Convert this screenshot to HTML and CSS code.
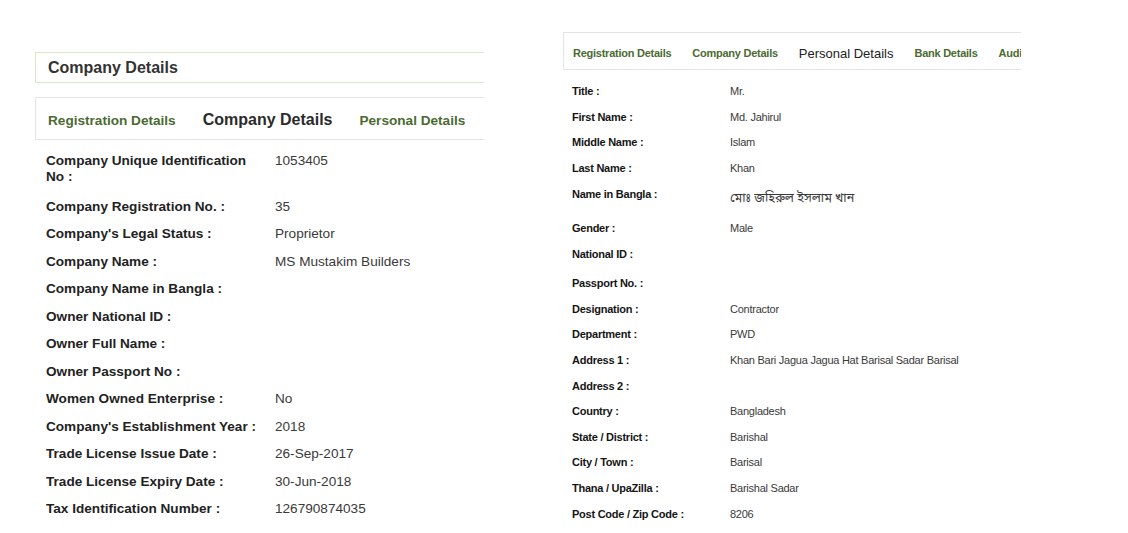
FILE: index.html
```html
<!DOCTYPE html>
<html lang="en">
<head>
    <meta charset="UTF-8">
    <meta name="viewport" content="width=device-width, initial-scale=1.0">
    <title>Contractor Profile</title>
    <link rel="stylesheet" href="styles.css">
</head>
<body>
    <div class="page">
        <!-- Company side -->
        <div class="panel company">
            <div class="panel-title">Company Details</div>

            <div class="tabs">
                <span class="tab">Registration Details</span>
                <span class="tab active">Company Details</span>
                <span class="tab">Personal Details</span>
            </div>

            <div class="details">
                <div class="row first">
                    <span class="label">Company Unique Identification No :</span>
                    <span class="value">1053405</span>
                </div>
                <div class="row">
                    <span class="label">Company Registration No. :</span>
                    <span class="value">35</span>
                </div>
                <div class="row">
                    <span class="label">Company's Legal Status :</span>
                    <span class="value">Proprietor</span>
                </div>
                <div class="row">
                    <span class="label">Company Name :</span>
                    <span class="value">MS Mustakim Builders</span>
                </div>
                <div class="row">
                    <span class="label">Company Name in Bangla :</span>
                    <span class="value"></span>
                </div>
                <div class="row">
                    <span class="label">Owner National ID :</span>
                    <span class="value"></span>
                </div>
                <div class="row">
                    <span class="label">Owner Full Name :</span>
                    <span class="value"></span>
                </div>
                <div class="row">
                    <span class="label">Owner Passport No :</span>
                    <span class="value"></span>
                </div>
                <div class="row">
                    <span class="label">Women Owned Enterprise :</span>
                    <span class="value">No</span>
                </div>
                <div class="row">
                    <span class="label">Company's Establishment Year :</span>
                    <span class="value">2018</span>
                </div>
                <div class="row">
                    <span class="label">Trade License Issue Date :</span>
                    <span class="value">26-Sep-2017</span>
                </div>
                <div class="row">
                    <span class="label">Trade License Expiry Date :</span>
                    <span class="value">30-Jun-2018</span>
                </div>
                <div class="row">
                    <span class="label">Tax Identification Number :</span>
                    <span class="value">126790874035</span>
                </div>
            </div>
        </div>

        <!-- Personal side -->
        <div class="panel personal">
            <div class="tabs">
                <span class="tab">Registration Details</span>
                <span class="tab">Company Details</span>
                <span class="tab active">Personal Details</span>
                <span class="tab">Bank Details</span>
                <span class="tab">Audit Details</span>
            </div>

            <div class="details">
                <div class="row">
                    <span class="label">Title :</span>
                    <span class="value">Mr.</span>
                </div>
                <div class="row">
                    <span class="label">First Name :</span>
                    <span class="value">Md. Jahirul</span>
                </div>
                <div class="row">
                    <span class="label">Middle Name :</span>
                    <span class="value">Islam</span>
                </div>
                <div class="row">
                    <span class="label">Last Name :</span>
                    <span class="value">Khan</span>
                </div>
                <div class="row">
                    <span class="label">Name in Bangla :</span>
                    <span class="value bangla" lang="bn">মোঃ জহিরুল ইসলাম খান</span>
                </div>
                <div class="row">
                    <span class="label">Gender :</span>
                    <span class="value">Male</span>
                </div>
                <div class="row spaced">
                    <span class="label">National ID :</span>
                    <span class="value"></span>
                </div>
                <div class="row">
                    <span class="label">Passport No. :</span>
                    <span class="value"></span>
                </div>
                <div class="row">
                    <span class="label">Designation :</span>
                    <span class="value">Contractor</span>
                </div>
                <div class="row">
                    <span class="label">Department :</span>
                    <span class="value">PWD</span>
                </div>
                <div class="row">
                    <span class="label">Address 1 :</span>
                    <span class="value">Khan Bari Jagua Jagua Hat Barisal Sadar Barisal</span>
                </div>
                <div class="row">
                    <span class="label">Address 2 :</span>
                    <span class="value"></span>
                </div>
                <div class="row">
                    <span class="label">Country :</span>
                    <span class="value">Bangladesh</span>
                </div>
                <div class="row">
                    <span class="label">State / District :</span>
                    <span class="value">Barishal</span>
                </div>
                <div class="row">
                    <span class="label">City / Town :</span>
                    <span class="value">Barisal</span>
                </div>
                <div class="row">
                    <span class="label">Thana / UpaZilla :</span>
                    <span class="value">Barishal Sadar</span>
                </div>
                <div class="row">
                    <span class="label">Post Code / Zip Code :</span>
                    <span class="value">8206</span>
                </div>
            </div>
        </div>
    </div>
</body>
</html>
```

FILE: styles.css
```css
/* Contractor profile: company and personal detail panels */
body {
    margin: 0;
    background-color: #ffffff;
    font-family: "Liberation Sans", Arial, sans-serif;
}

.page {
    display: flex;
    align-items: flex-start;
    padding-left: 35px;
}

.panel {
    overflow: hidden;
    white-space: nowrap;
}

/* ---------- company panel ---------- */
.company {
    width: 449px;
    padding-top: 52px;
}

.panel-title {
    height: 29px;
    line-height: 29px;
    padding-left: 12px;
    border: 1px solid #d6e9c6;
    border-right: none;
    font-size: 16px;
    font-weight: bold;
    color: #333;
    margin-bottom: 14px;
}

.tabs {
    display: flex;
    align-items: center;
    border: 1px solid #e4e4e4;
    border-right: none;
}

.tab {
    font-weight: bold;
    color: #4b6a32;
    flex-shrink: 0;
}

.tab.active {
    color: #2b2b2b;
}

.company .tabs {
    height: 38px;
    padding-top: 3px;
    padding-left: 12px;
    gap: 27px;
    font-size: 13.6px;
}

.company .tab.active {
    font-size: 16px;
}

.company .details {
    margin-top: 7px;
}

.row {
    display: flex;
    align-items: flex-start;
}

.company .row {
    padding: 5.75px 0 5.75px 11px;
    font-size: 13.6px;
    line-height: 16px;
}

.company .row.first {
    padding-bottom: 8.4px;
}

.company .label {
    width: 217px;
    padding-right: 12px;
    white-space: normal;
}

.label {
    flex-shrink: 0;
    font-weight: bold;
    color: #222;
}

.value {
    color: #3a3a3a;
}

/* ---------- personal panel ---------- */
.personal {
    width: 458px;
    margin-left: 79px;
    padding-top: 32px;
    letter-spacing: -0.25px;
}

.personal .tabs {
    height: 32px;
    padding-top: 4px;
    padding-left: 9px;
    gap: 21px;
    font-size: 11px;
}

.personal .tab.active {
    font-size: 13px;
    font-weight: normal;
    letter-spacing: 0;
    color: #222;
}

.personal .details {
    margin-top: 9px;
}

.personal .row {
    padding: 5.3px 0 5.3px 9px;
    font-size: 11px;
    line-height: 15px;
}

.personal .row.spaced {
    padding-bottom: 9px;
}

.personal .label {
    width: 158px;
    color: #151515;
}

.personal .value.bangla {
    font-family: "Noto Sans Bengali", "Noto Serif Bengali", "Lohit Bengali", "Noto Sans", sans-serif;
    font-size: 12.5px;
    line-height: 24px;
    letter-spacing: 0;
}
```
